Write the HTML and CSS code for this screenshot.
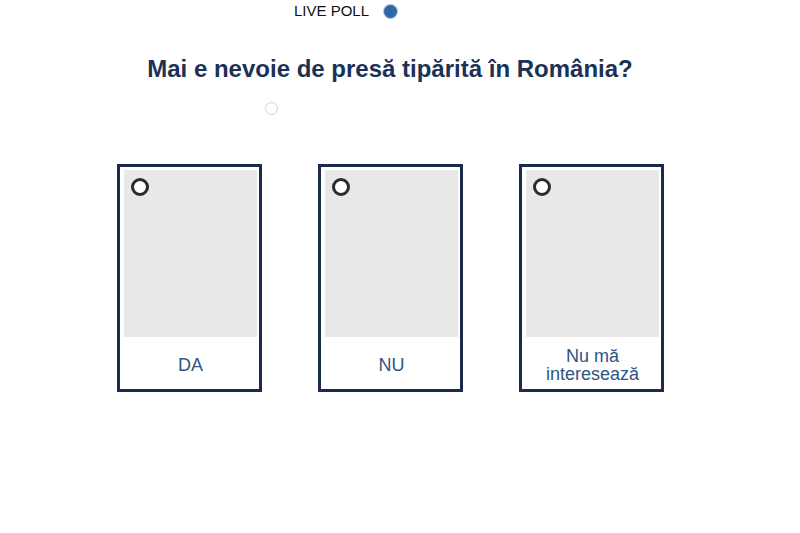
FILE: index.html
```html
<!DOCTYPE html>
<html lang="ro">
<head>
<meta charset="utf-8">
<link rel="stylesheet" href="styles.css">
</head>
<body>
<div class="page">
  <div class="header">
    <span class="live">LIVE POLL</span>
    <span class="dot"></span>
  </div>
  <h1 class="title">Mai e nevoie de presă tipărită în România?</h1>
  <div class="spinner-row"><span class="spinner"></span></div>
  <div class="cards">
    <div class="card">
      <div class="thumb"><span class="radio"></span></div>
      <div class="label">DA</div>
    </div>
    <div class="card">
      <div class="thumb"><span class="radio"></span></div>
      <div class="label">NU</div>
    </div>
    <div class="card">
      <div class="thumb"><span class="radio"></span></div>
      <div class="label">Nu mă interesează</div>
    </div>
  </div>
</div>
</body>
</html>
```
FILE: styles.css
```css
* { box-sizing: border-box; }
html, body { margin: 0; padding: 0; background: #ffffff; }
body { font-family: "Liberation Sans", Arial, sans-serif; }
.page { width: 780px; }
.header {
  display: flex;
  align-items: center;
  height: 22px;
  padding-left: 294px;
  gap: 15px;
}
.live { font-size: 15px; color: #111111; line-height: 22px; }
.dot {
  width: 13px; height: 13px; border-radius: 50%;
  background: #2f68a6;
  box-shadow: 0 0 0 1px #a9c3df;
}
.title {
  margin: 32px 0 0 0;
  text-align: center;
  font-size: 24px;
  font-weight: bold;
  color: #1b3155;
  line-height: 30px;
}
.spinner-row { height: 24px; padding: 18px 0 0 265px; box-sizing: content-box; }
.spinner {
  display: block;
  width: 13px; height: 13px; border-radius: 50%;
  border: 1px solid #d2d2d2;
}
.cards {
  display: flex;
  justify-content: center;
  gap: 56px;
  margin-top: 38px;
  padding-left: 1px;
}
.card {
  width: 145px;
  height: 228px;
  border: 3px solid #1c2b4d;
  padding: 3px 2px 0 4px;
  display: flex;
  flex-direction: column;
}
.thumb {
  height: 167px;
  background: #e8e8e8;
  padding: 8px 0 0 7px;
}
.radio {
  display: block;
  width: 18px; height: 18px; border-radius: 50%;
  border: 3px solid #2b2b2b;
  background: #ffffff;
}
.label {
  flex: 1;
  display: flex;
  align-items: center;
  justify-content: center;
  text-align: center;
  font-size: 18px;
  line-height: 18px;
  color: #2e5584;
  padding: 3px 8px 0;
}
```
